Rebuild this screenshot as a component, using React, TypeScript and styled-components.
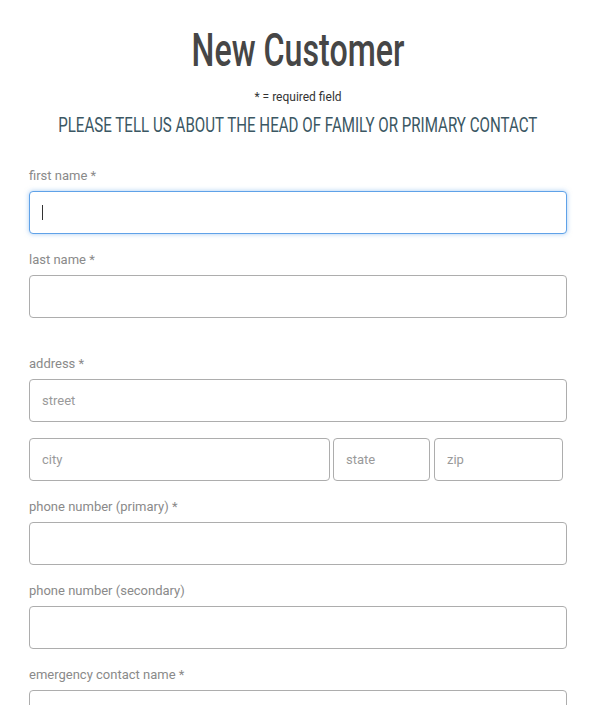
import React from 'react';
import styled, { createGlobalStyle, css } from 'styled-components';

const GlobalStyle = createGlobalStyle`
  html, body {
    margin: 0;
    padding: 0;
    background: #ffffff;
  }
  body {
    font-family: 'Roboto', 'Liberation Sans', sans-serif;
  }
  * {
    box-sizing: border-box;
  }
`;

const Page = styled.div`
  padding: 22px 28px 0 29px;
  width: 595px;
  height: 705px;
  overflow: hidden;
`;

const Header = styled.header`
  display: flex;
  flex-direction: column;
  align-items: center;
`;

// condensed display face stand-in: Roboto squeezed horizontally
const Title = styled.h1`
  margin: 0;
  font-family: 'Roboto', 'Liberation Sans', sans-serif;
  font-weight: 500;
  font-size: 46px;
  line-height: 56px;
  color: #464646;
  white-space: nowrap;
  transform: scaleX(0.7);
`;

const Required = styled.p`
  margin: 12px 0 0;
  font-size: 12px;
  line-height: 14px;
  color: #333;
`;

const Subtitle = styled.h2`
  margin: 9px 0 0;
  font-family: 'Roboto', 'Liberation Sans', sans-serif;
  font-weight: 400;
  font-size: 21px;
  line-height: 24px;
  color: #3b5763;
  white-space: nowrap;
  transform: scaleX(0.72);
`;

const Form = styled.form`
  display: flex;
  flex-direction: column;
  margin-top: 31px;
`;

const Field = styled.div<{ $gapAfter?: number }>`
  display: flex;
  flex-direction: column;
  gap: 7px;
  margin-bottom: ${(p) => (p.$gapAfter ?? 18)}px;
`;

const Label = styled.label`
  font-size: 13px;
  line-height: 16px;
  color: #8a8a8a;
`;

const InputBox = styled.div`
  position: relative;
`;

const Caret = styled.span`
  position: absolute;
  left: 13px;
  top: 14px;
  width: 1px;
  height: 15px;
  background: #333;
`;

const Input = styled.input<{ $focused?: boolean; $width?: number }>`
  display: block;
  height: 43px;
  width: ${(p) => (p.$width ? `${p.$width}px` : '100%')};
  padding: 0 12px;
  border: 1px solid #adadad;
  border-radius: 4px;
  background: #fff;
  font-family: 'Roboto', 'Liberation Sans', sans-serif;
  font-size: 13px;
  color: #333;
  outline: none;

  &::placeholder {
    color: #9a9a9a;
  }

  ${(p) =>
    p.$focused &&
    css`
      border-color: #5fa2e8;
      box-shadow: 0 0 5px rgba(95, 162, 232, 0.55);
    `}
`;

const AddressRow = styled.div`
  display: flex;
  gap: 3px;
  margin-top: 16px;
  margin-bottom: 18px;
`;

const Zip = styled(Input)`
  margin-left: 1px;
`;

export default function App() {
  return (
    <>
      <GlobalStyle />
      <Page>
        <Header>
          <Title>New Customer</Title>
          <Required>* = required field</Required>
          <Subtitle>PLEASE TELL US ABOUT THE HEAD OF FAMILY OR PRIMARY CONTACT</Subtitle>
        </Header>
        <Form>
          <Field>
            <Label>first name *</Label>
            <InputBox>
              <Input $focused />
              <Caret />
            </InputBox>
          </Field>
          <Field $gapAfter={38}>
            <Label>last name *</Label>
            <Input />
          </Field>
          <Field $gapAfter={0}>
            <Label>address *</Label>
            <Input placeholder="street" />
          </Field>
          <AddressRow>
            <Input placeholder="city" $width={301} />
            <Input placeholder="state" $width={97} />
            <Zip placeholder="zip" $width={129} />
          </AddressRow>
          <Field>
            <Label>phone number (primary) *</Label>
            <Input />
          </Field>
          <Field>
            <Label>phone number (secondary)</Label>
            <Input />
          </Field>
          <Field>
            <Label>emergency contact name *</Label>
            <Input />
          </Field>
        </Form>
      </Page>
    </>
  );
}
